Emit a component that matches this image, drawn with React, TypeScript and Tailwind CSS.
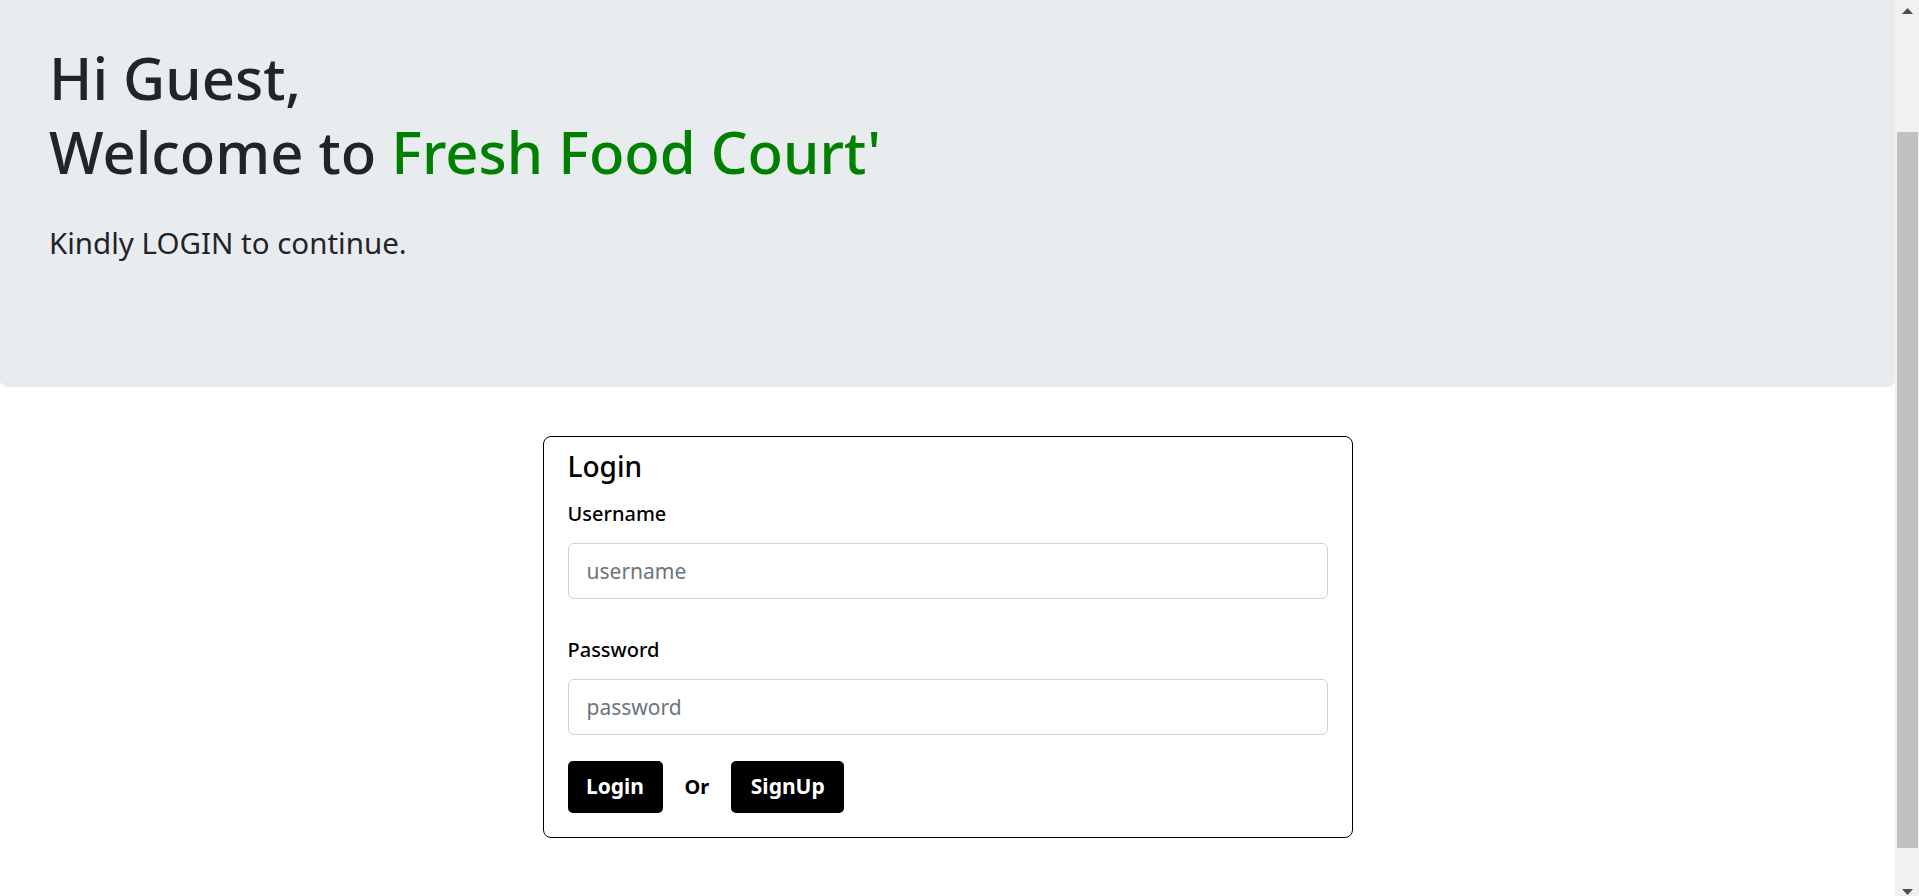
import React from "react";

function Scrollbar() {
  return (
    <div className="w-[24px] h-[896px] bg-[#f1f1f1] flex flex-col items-center shrink-0">
      <div className="h-[22px] w-full flex items-start justify-center pt-[8px]">
        <svg width="11" height="6" viewBox="0 0 11 6">
          <polygon points="5.5,0 11,6 0,6" fill="#505050" />
        </svg>
      </div>
      <div className="flex-1 w-full flex flex-col pl-[2px] pr-[1px]">
        <div className="h-[110px]" />
        <div className="h-[716px] bg-[#c1c1c1]" />
      </div>
      <div className="h-[22px] w-full flex items-end justify-center pb-[1px]">
        <svg width="11" height="6" viewBox="0 0 11 6">
          <polygon points="0,0 11,0 5.5,6" fill="#505050" />
        </svg>
      </div>
    </div>
  );
}

export default function App() {
  return (
    <div className="flex w-full h-[896px] overflow-hidden bg-white font-['Noto_Sans','Open_Sans',sans-serif]">
      <div className="flex-1 min-w-0 flex flex-col">
        <div className="bg-[#e9ecef] rounded-b-[7px] pt-[41px] pb-[122px] pl-[49px]">
          <h1 className="text-[58px] leading-[74px] text-[#212529] font-medium">
            Hi Guest,
            <br />
            Welcome to <span className="text-[#008000]">Fresh Food Court'</span>
          </h1>
          <p className="mt-[32px] text-[29.5px] leading-[43.5px] text-[#212529]">
            Kindly LOGIN to continue.
          </p>
        </div>

        <div className="mt-[49px] mx-auto w-[810px] border border-black rounded-[8px] px-[24px] pt-[13px] pb-[24px] text-black">
          <h5 className="text-[28px] leading-[33.6px] font-medium">Login</h5>
          <div className="mt-[16px]">
            <label className="block text-[20px] leading-[30px] font-medium">Username</label>
            <input
              type="text"
              placeholder="username"
              className="mt-[14px] block w-full h-[56px] border border-[#ced4da] rounded-[6px] px-[18px] text-[21px] placeholder:text-[#6c757d] outline-none"
            />
          </div>
          <div className="mt-[36px]">
            <label className="block text-[20px] leading-[30px] font-medium">Password</label>
            <input
              type="password"
              placeholder="password"
              className="mt-[14px] block w-full h-[56px] border border-[#ced4da] rounded-[6px] px-[18px] text-[21px] placeholder:text-[#6c757d] outline-none"
            />
          </div>
          <div className="mt-[26px] flex items-center gap-[22px]">
            <button className="h-[52px] w-[95px] bg-black text-white rounded-[5px] text-[21px] font-bold">
              Login
            </button>
            <span className="text-[20px] font-bold">Or</span>
            <button className="h-[52px] w-[113px] bg-black text-white rounded-[5px] text-[21px] font-bold">
              SignUp
            </button>
          </div>
        </div>
      </div>
      <Scrollbar />
    </div>
  );
}
